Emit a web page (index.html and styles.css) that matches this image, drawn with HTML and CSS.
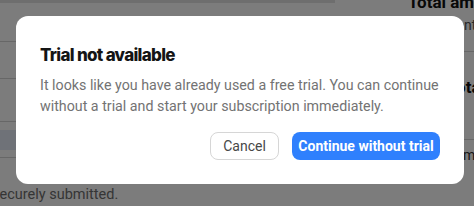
FILE: index.html
```html
<!DOCTYPE html>
<html lang="en">
<head>
  <meta charset="UTF-8">
  <title>Trial not available</title>
  <link rel="stylesheet" href="styles.css">
</head>
<body>
<div class="page">
  <div class="main">
    <div class="topbar"></div>
    <div class="row r1"></div>
    <div class="row r2"></div>
    <div class="row r3"></div>
    <div class="band"></div>
    <div class="row r4"></div>
    <p class="note">securely submitted.</p>
  </div>
  <div class="side">
    <div class="side-title">Total amount</div>
    <div class="side-sub">Billed monthly, cancel anytime</div>
    <div class="side-line"></div>
    <div class="side-total">Total</div>
    <div class="side-line2"></div>
    <div class="side-small">Summary</div>
  </div>
</div>

<div class="overlay">
  <div class="modal">
    <h3>Trial not available</h3>
    <p>It looks like you have already used a free trial. You can continue without a trial and start your subscription immediately.</p>
    <div class="actions">
      <button class="btn btn-cancel">Cancel</button>
      <button class="btn btn-primary">Continue without trial</button>
    </div>
  </div>
</div>
</body>
</html>
```
FILE: styles.css
```css
body {
  margin: 0;
  font-family: Roboto, "Liberation Sans", sans-serif;
  background: #fff;
  overflow: hidden;
}

.page {
  display: flex;
  width: 474px;
  height: 206px;
}

.main {
  width: 400px;
  flex-shrink: 0;
}

.topbar {
  width: 335px;
  height: 3px;
  background: #e2e2e2;
}

.row {
  border-bottom: 1px solid #d4d4d4;
}

.r1 { height: 38px; }
.r2 { height: 36px; }
.r3 { height: 42px; }
.r4 { height: 7px; }

.band {
  height: 20px;
  margin-top: 8px;
  background: #e4ebf6;
}

.note {
  margin: 28px 0 0 -8px;
  font-size: 14.5px;
  color: #6e6e6e;
}

.side {
  flex: 1;
  min-width: 0;
}

.side-title {
  margin: -8px 0 0 8px;
  font-size: 17px;
  font-weight: 700;
  color: #111;
  white-space: nowrap;
}

.side-sub {
  margin-top: 5px;
  margin-left: 6px;
  font-size: 14px;
  color: #555;
  white-space: nowrap;
}

.side-line {
  margin-top: 18px;
  border-bottom: 1px solid #d4d4d4;
}

.side-total {
  margin-top: 25px;
  margin-left: 47px;
  font-size: 17px;
  font-weight: 700;
  color: #111;
  white-space: nowrap;
}

.side-line2 {
  margin-top: 42px;
  border-bottom: 1px solid #d4d4d4;
}

.side-small {
  margin-top: 7px;
  margin-left: 47px;
  font-size: 14px;
  color: #333;
  white-space: nowrap;
}

.overlay {
  position: fixed;
  top: 0;
  left: 0;
  width: 100vw;
  height: 100vh;
  background: rgba(0, 0, 0, 0.515);
  padding: 16px 10px 22px 16px;
  box-sizing: border-box;
}

.modal {
  background: #fff;
  border-radius: 12px;
  padding: 24px;
  height: 168px;
  box-sizing: border-box;
}

.modal h3 {
  margin: 3px 0 0;
  font-family: Inter, "Liberation Sans", sans-serif;
  font-size: 17px;
  font-weight: 800;
  letter-spacing: -0.7px;
  color: #151515;
  line-height: 24px;
}

.modal p {
  margin: 8px 0 0;
  font-size: 14.25px;
  line-height: 21px;
  color: #737373;
}

.actions {
  display: flex;
  justify-content: flex-end;
  gap: 13px;
  margin-top: 15px;
}

.btn {
  font-family: Roboto, "Liberation Sans", sans-serif;
  font-size: 14px;
  height: 28px;
  border-radius: 8px;
  cursor: pointer;
}

.btn-cancel {
  width: 69px;
  background: #fff;
  border: 1px solid #d6d6d6;
  color: #474747;
}

.btn-primary {
  width: 148px;
  background: #2f80fd;
  border: none;
  color: #fff;
  font-weight: 700;
}
```
